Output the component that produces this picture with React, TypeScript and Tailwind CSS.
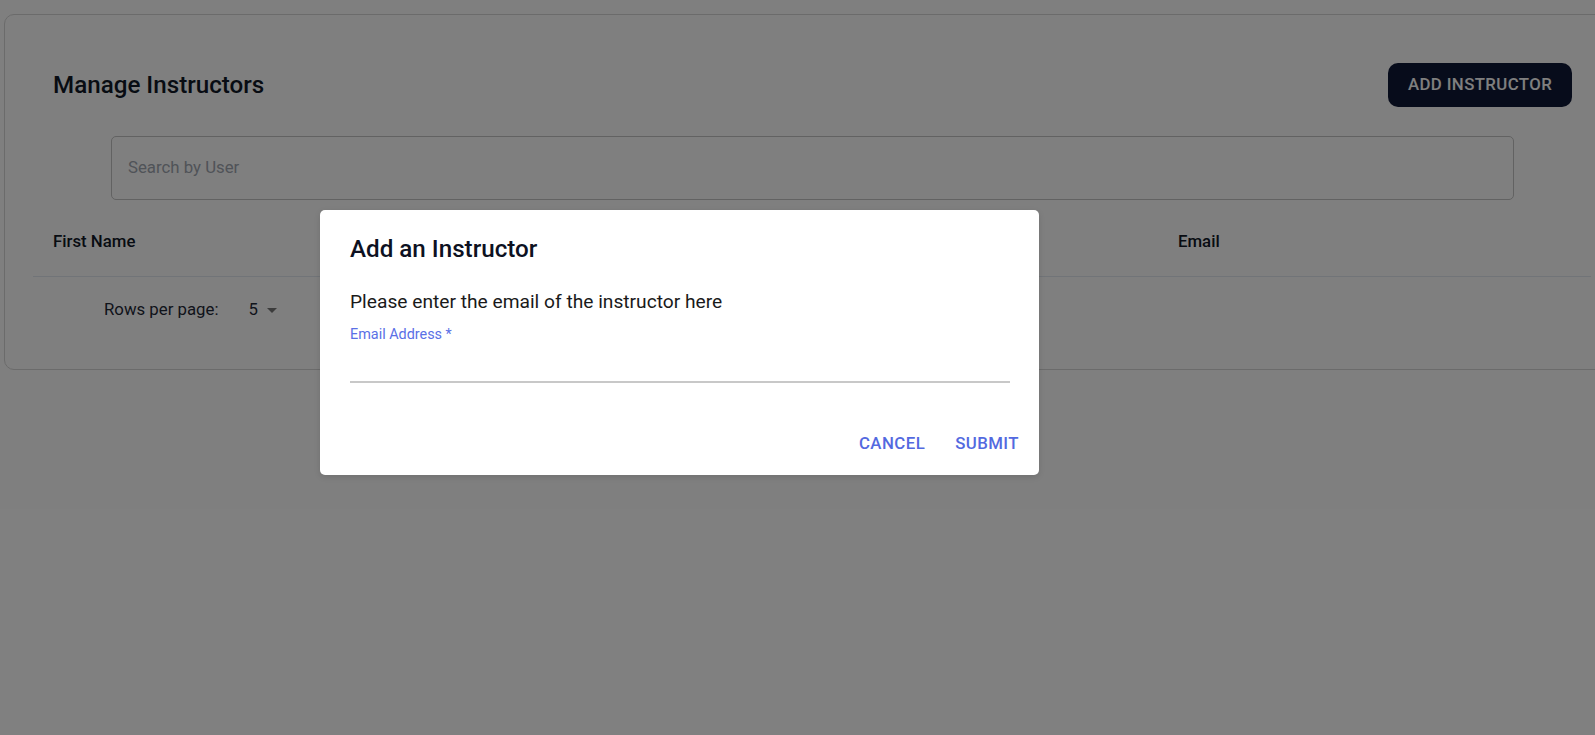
import React from "react";

const FONT = "font-['Roboto','Liberation_Sans',sans-serif]";

export default function App() {
  return (
    <div className={`relative w-screen h-screen overflow-hidden bg-white ${FONT}`}>
      {/* page card */}
      <div className="ml-[4px] mt-[14px] w-[1615px] rounded-[10px] border border-[#d6d6d6] bg-white pt-[48px] pb-[27px]">
        {/* header */}
        <div className="ml-[48px] w-[1519px]">
          <div className="flex h-[44px] items-center justify-between">
            <h1 className="text-[24.2px] font-medium leading-none text-[#111827]">Manage Instructors</h1>
            <button className="h-[44px] w-[184px] rounded-[10px] bg-[#0f1836] text-[16.8px] font-medium uppercase tracking-[0.4px] text-white">
              Add Instructor
            </button>
          </div>
          <div className="mx-[58px] mt-[29px] flex h-[64px] items-center rounded-[5px] border border-[#c4c4c4] px-[16px]">
            <input
              className="w-full bg-transparent text-[16.8px] text-[#111827] outline-none placeholder:text-[#a0a6b0]"
              placeholder="Search by User"
            />
          </div>
        </div>

        {/* table */}
        <div className="ml-[28px] mt-[9px] w-[1558px]">
          <div className="grid h-[68px] grid-cols-[560px_565px_433px] items-center border-b border-[#e2e8f0] px-[20px] pb-[1px] text-[16.8px] font-medium text-[#111827]">
            <div>First Name</div>
            <div>Last Name</div>
            <div>Email</div>
          </div>
          <div className="flex h-[65px] items-center pl-[71px] text-[16.8px] text-[#1f2937]">
            <span>Rows per page:</span>
            <span className="ml-[30px]">5</span>
            <svg className="ml-[9px] mt-[1px]" width="10" height="5" viewBox="0 0 10 5">
              <path d="M0 0h10L5 5z" fill="#787878" />
            </svg>
          </div>
        </div>
      </div>

      {/* backdrop + dialog */}
      <div className="absolute inset-0 bg-black/50">
        <div className="absolute left-[320px] top-[210px] flex h-[265px] w-[719px] flex-col rounded-[5px] bg-white shadow-[0_2px_6px_rgba(0,0,0,0.12)]">
          <h2 className="px-[30px] pt-[20px] pb-[19px] text-[24.2px] font-medium leading-[38px] text-[#0d1122]">
            Add an Instructor
          </h2>
          <div className="px-[30px]">
            <p className="text-[19.2px] leading-[29px] text-[#1a1a1a]">Please enter the email of the instructor here</p>
            <label className="mt-[10px] block text-[14.4px] leading-[17px] text-[#5a70e6]">Email Address *</label>
            <input className="h-[38px] w-[660px] bg-transparent text-[19.2px] text-[#111827] outline-none" />
            <div className="h-[2px] w-[660px] bg-[#c8c8c8]" />
          </div>
          <div className="mt-[43px] flex justify-end gap-[10px] pr-[10px]">
            <button className="h-[36px] px-[10px] text-[16.8px] font-medium uppercase tracking-[0.45px] text-[#5369e0]">
              Cancel
            </button>
            <button className="h-[36px] px-[10px] text-[16.8px] font-medium uppercase tracking-[0.45px] text-[#5369e0]">
              Submit
            </button>
          </div>
        </div>
      </div>
    </div>
  );
}
